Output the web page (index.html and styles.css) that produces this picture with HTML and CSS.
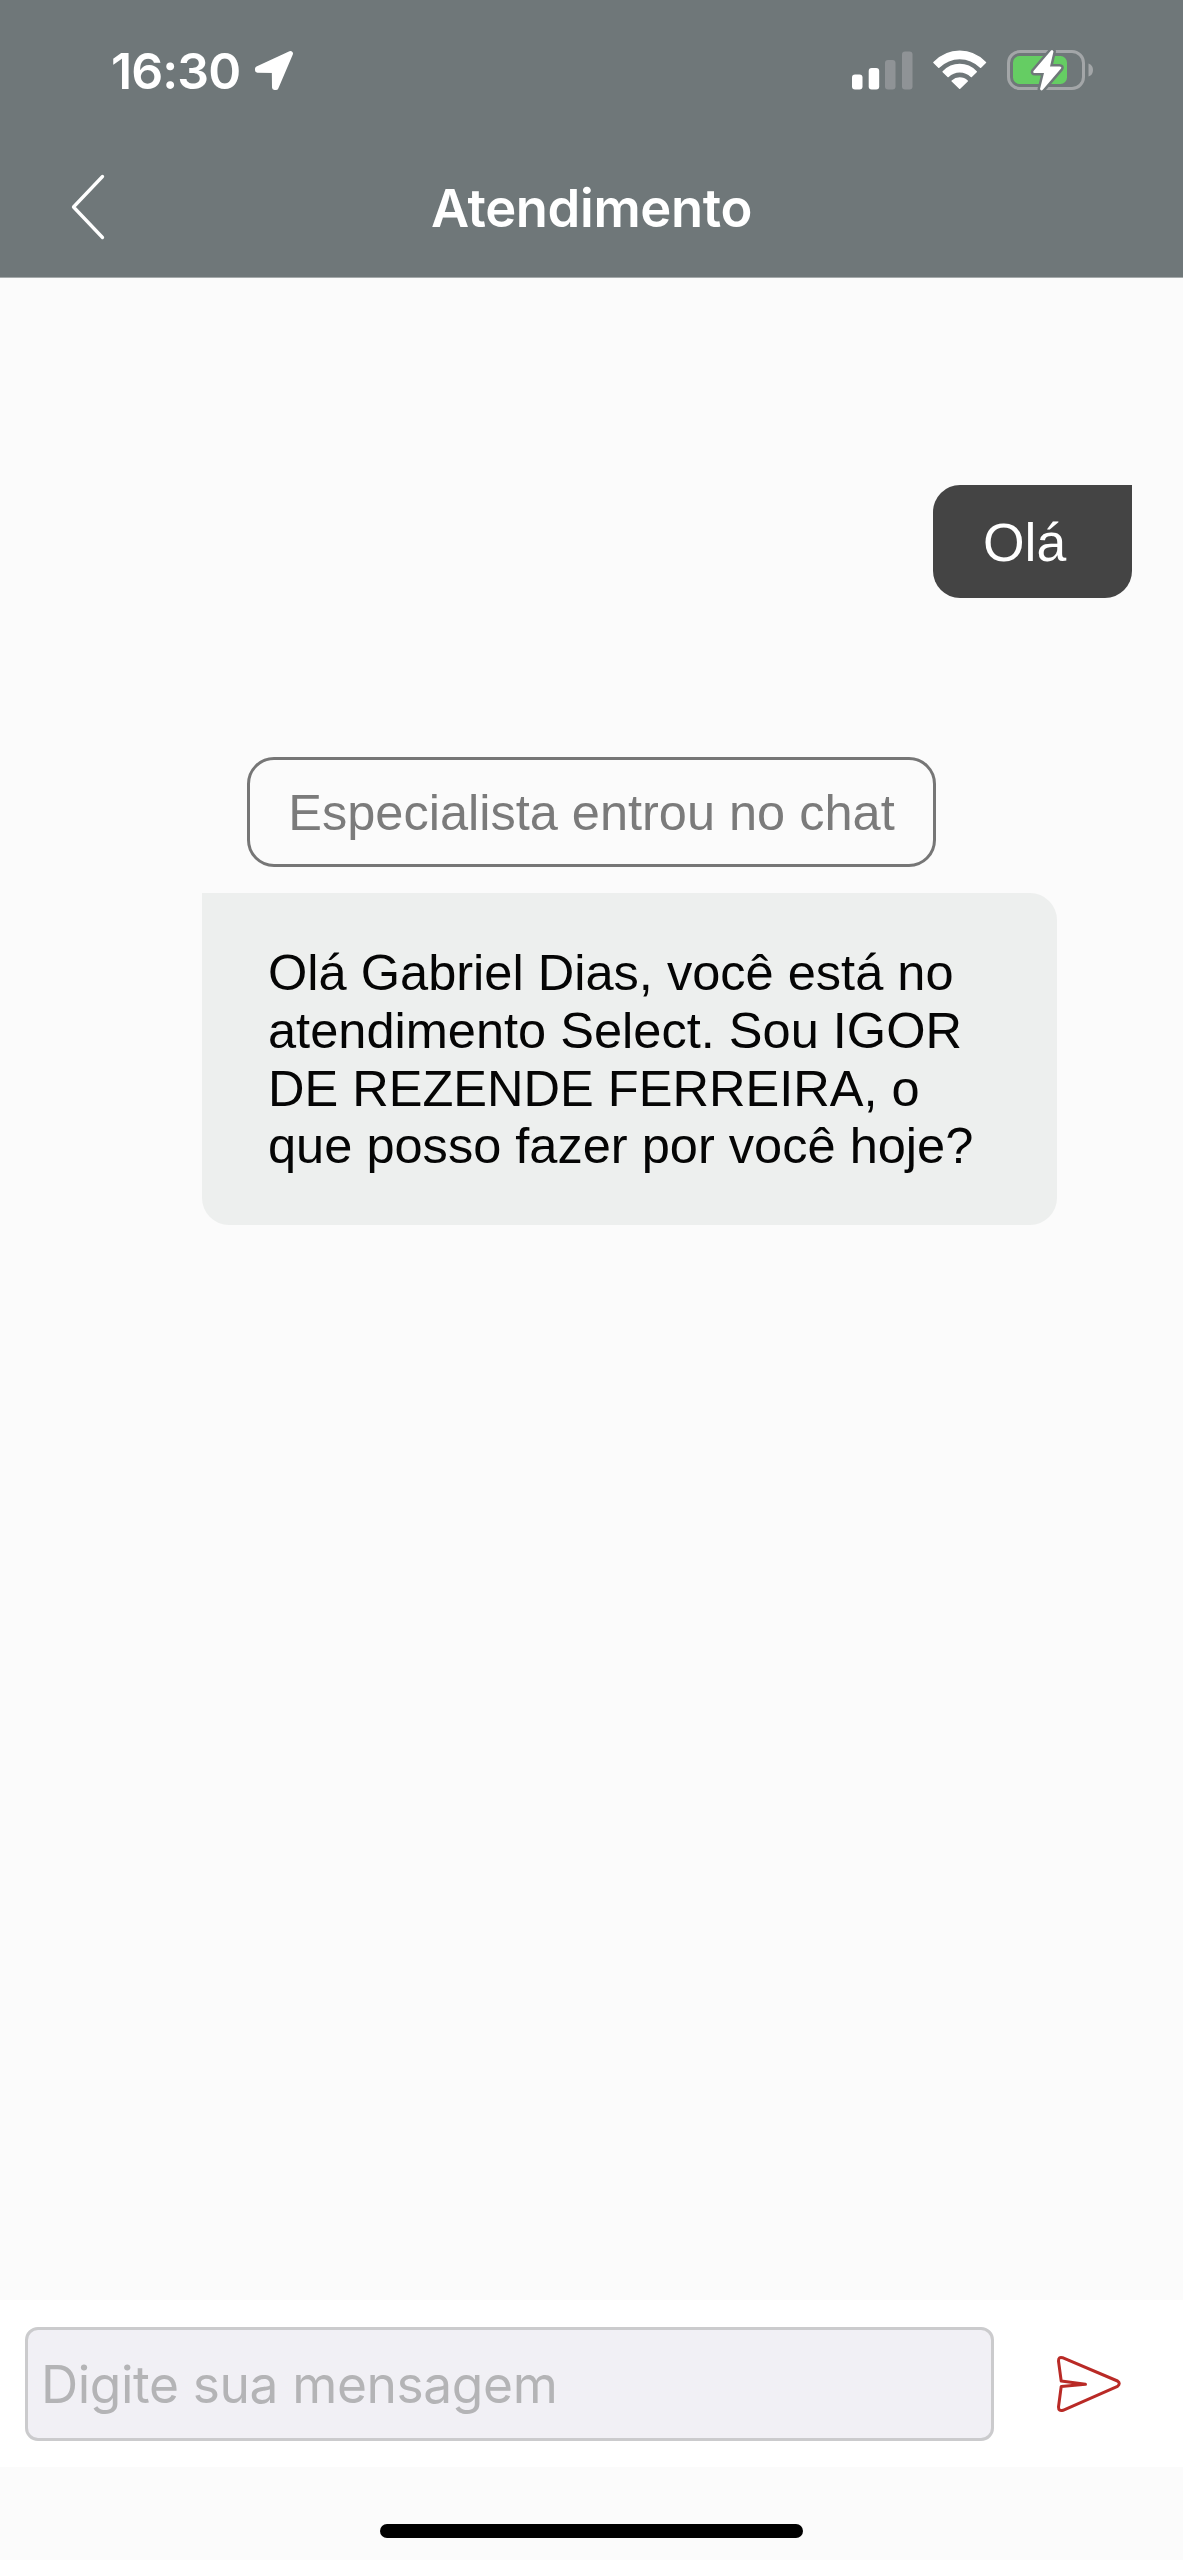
FILE: index.html
```html
<!DOCTYPE html>
<html lang="pt-BR">
<head>
<meta charset="utf-8">
<title>Atendimento</title>
<link rel="stylesheet" href="styles.css">
</head>
<body>
<div class="screen">
  <header class="header">
    <div class="status">
      <span class="time">16:30</span>
      <svg class="location" width="40" height="41" viewBox="0 0 40 41"><path d="M36.5 3.5 L22 37.5 L20.500 37.500 L20.300 20.500 L3.500 20.300 L3.500 18.700 Z" fill="#fff" stroke="#fff" stroke-width="5" stroke-linejoin="round"/></svg>
      <div class="indicators">
        <svg class="signal" width="61" height="39" viewBox="0 0 61 39">
          <rect x="0" y="23.500" width="10.500" height="15" rx="3" fill="#fff"/>
          <rect x="16.700" y="17" width="10.500" height="21.500" rx="3" fill="#fff"/>
          <rect x="33" y="9" width="10.500" height="29.500" rx="3" fill="#8f9396"/>
          <rect x="50" y="0.500" width="10.500" height="38" rx="3" fill="#8f9396"/>
        </svg>
        <svg class="wifi" width="54" height="40" viewBox="0 0 54 40" fill="#fff" stroke="#fff" stroke-width="1.600" stroke-linejoin="round">
          <path d="M1 12.500 Q12 1.300 26.700 1.300 Q41.500 1.300 52.400 12.500 L47.600 17.200 Q38.500 8.400 26.700 8.400 Q15 8.400 5.800 17.200 Z"/>
          <path d="M10.200 21.700 Q17.300 14.600 26.700 14.600 Q36.200 14.600 43.200 21.700 L38.300 26.500 Q33.500 21.700 26.700 21.700 Q20 21.700 15.100 26.500 Z"/>
          <path d="M19.200 31 Q22.500 28 26.700 28 Q31 28 34.200 31 L26.700 38.200 Z"/>
        </svg>
        <svg class="battery" width="88" height="44" viewBox="0 0 88 44">
          <rect x="1.500" y="3.500" width="75" height="37" rx="11.500" fill="none" stroke="#a3a6a8" stroke-width="3"/>
          <path d="M81.500 15.500 Q86 17 86 22 Q86 27 81.500 28.500 Z" fill="#a3a6a8"/>
          <rect x="6" y="8" width="54" height="28" rx="6.500" fill="#65cd63"/>
          <path d="M44 2.500 L26.500 23 Q25.500 25 28 25 L37 25 L33 41 Q34 43.500 36 41.500 L54 20.500 Q55 18.500 52.500 18.500 L43 18.500 L46.500 3.500 Q45.500 1 44 2.500 Z" fill="#fff" stroke="#6f7779" stroke-width="5" paint-order="stroke" stroke-linejoin="round"/>
        </svg>
      </div>
    </div>
    <div class="nav">
      <svg class="back" width="36" height="68" viewBox="0 0 36 68"><path d="M32.500 3.500 L3.500 34 L32.500 64.500" fill="none" stroke="#fff" stroke-width="3.300" stroke-linecap="round" stroke-linejoin="round"/></svg>
      <h1 class="title">Atendimento</h1>
    </div>
  </header>
  <main class="chat">
    <div class="bubble sent">Olá</div>
    <div class="notice">Especialista entrou no chat</div>
    <div class="bubble received">Olá Gabriel Dias, você está no<br>atendimento Select. Sou IGOR<br>DE REZENDE FERREIRA, o<br>que posso fazer por você hoje?</div>
  </main>
  <div class="composer">
    <div class="field"><span class="placeholder">Digite sua mensagem</span></div>
    <svg class="send" width="66" height="58" viewBox="0 0 66 58"><path d="M6.500 2.700 L61.500 26 Q65 28.500 61.500 31.300 L7 55.300 Q2.500 56.500 2.500 52 L5.200 31.500 L29.500 29.300 L5.200 26 L2.500 6 Q2.500 1.500 6.500 2.700 Z" fill="none" stroke="#b92a26" stroke-width="3" stroke-linejoin="round"/></svg>
  </div>
  <footer class="footer"><div class="home"></div></footer>
</div>
</body>
</html>
```
FILE: styles.css
```css
* {
  box-sizing: border-box;
}

body {
  margin: 0;
  background: #fbfbfb;
  font-family: "Liberation Sans", Arial, sans-serif;
}

svg {
  display: block;
  flex: none;
}

.screen {
  display: flex;
  flex-direction: column;
  width: 1183px;
  height: 2560px;
  overflow: hidden;
}

.header {
  height: 278px;
  background: #6f7779;
  border-bottom: 1px solid #a5aaab;
  color: #fff;
  font-family: Inter, sans-serif;
  font-weight: 600;
}

.status {
  display: flex;
  align-items: center;
  height: 140px;
  padding: 0 88px 0 111px;
}

.time {
  width: 143px;
  padding-top: 2px;
  font-size: 50px;
  line-height: 60px;
  letter-spacing: -0.9px;
  white-space: nowrap;
}

.indicators {
  display: flex;
  align-items: center;
  margin-left: auto;
}

.wifi {
  margin-left: 20px;
}

.battery {
  margin-left: 20px;
}

.nav {
  display: grid;
  grid-template-columns: 108px 1fr 108px;
  align-items: center;
  height: 134px;
}

.back {
  margin-left: 70px;
}

.title {
  margin: 0;
  padding-top: 2px;
  font-size: 52.5px;
  font-weight: 600;
  line-height: 64px;
  letter-spacing: -0.35px;
  text-align: center;
}

.chat {
  display: flex;
  flex: 1;
  flex-direction: column;
  padding-top: 207px;
}

.sent {
  align-self: flex-end;
  width: 199px;
  height: 113px;
  margin-right: 51px;
  padding-left: 50px;
  border-radius: 27px 0 27px 27px;
  background: #444;
  color: #fff;
  font-size: 53.500px;
  line-height: 115px;
}

.notice {
  align-self: center;
  width: 689px;
  height: 110px;
  margin-top: 159px;
  border: 3px solid #767676;
  border-radius: 27px;
  color: #7b7b7b;
  font-size: 50.500px;
  line-height: 105px;
  text-align: center;
  white-space: nowrap;
}

.received {
  width: 855px;
  height: 332px;
  margin: 26px 0 0 202px;
  padding: 51px 0 0 66px;
  border-radius: 0 27px 27px 27px;
  background: #edefee;
  color: #050505;
  font-size: 50.550px;
  line-height: 57.800px;
  white-space: nowrap;
}

.composer {
  display: flex;
  align-items: center;
  height: 167px;
  padding-left: 25px;
  background: #fff;
}

.field {
  display: flex;
  align-items: center;
  width: 969px;
  height: 114px;
  padding-left: 13px;
  border: 3px solid #cbcbcd;
  border-radius: 13px;
  background: #f1f0f5;
}

.placeholder {
  color: #b4b4b6;
  font-family: Inter, sans-serif;
  font-size: 51.500px;
  line-height: 62px;
  letter-spacing: -0.4px;
  white-space: nowrap;
}

.send {
  margin-left: 62px;
}

.footer {
  height: 93px;
  padding-top: 57px;
}

.home {
  width: 423px;
  height: 14px;
  margin: 0 auto;
  border-radius: 7px;
  background: #000;
}
```
